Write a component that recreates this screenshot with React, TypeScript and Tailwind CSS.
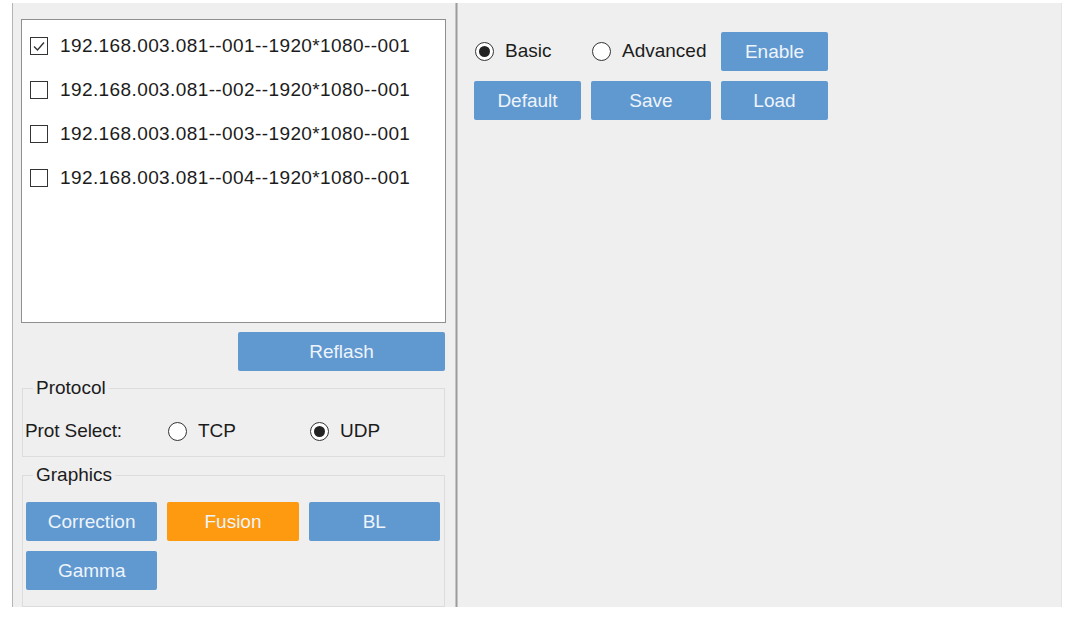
import React from 'react';

const font = { fontFamily: '"Liberation Sans", Arial, sans-serif' };

const devices = [
  '192.168.003.081--001--1920*1080--001',
  '192.168.003.081--002--1920*1080--001',
  '192.168.003.081--003--1920*1080--001',
  '192.168.003.081--004--1920*1080--001',
];

function CheckBox({ checked = false }: { checked?: boolean }) {
  return (
    <span className="w-[18px] h-[18px] border border-[#333] bg-white flex items-center justify-center shrink-0">
      {checked && (
        <svg width="14" height="14" viewBox="0 0 14 14">
          <path d="M2 7.5 L5.5 11 L12 3.5" fill="none" stroke="#333" strokeWidth="1.4" />
        </svg>
      )}
    </span>
  );
}

function Radio({ label, checked = false }: { label: string; checked?: boolean }) {
  return (
    <span className="flex items-center gap-[11px]">
      <span className="w-[19px] h-[19px] rounded-full border border-[#333] bg-white flex items-center justify-center shrink-0">
        {checked && <span className="w-[11px] h-[11px] rounded-full bg-[#222]" />}
      </span>
      <span>{label}</span>
    </span>
  );
}

function Btn({ label, orange = false, className = '' }: { label: string; orange?: boolean; className?: string }) {
  return (
    <button
      className={`h-[39px] rounded-[2px] text-[19px] pt-[2px] text-[#eef4fb] ${orange ? 'bg-[#fd9a10]' : 'bg-[#6098d0]'} ${className}`}
    >
      {label}
    </button>
  );
}

export default function App() {
  return (
    <div className="w-[1070px] h-[624px] bg-white pt-[3px] pl-[12px]" style={font}>
      <div className="w-[1050px] h-[604px] bg-[#efefef] border-l border-l-[#b4b4b4] border-r border-r-[#e4e4e4] flex text-[19px] text-[#1c1c1c]">
        {/* left side */}
        <div className="w-[442px] pl-[8px] pr-[9px] pt-[16px] flex flex-col">
          <div className="h-[304px] bg-white border border-[#8f8f8f] pt-[4px] pl-[8px]">
            {devices.map((d, i) => (
              <div key={d} className="h-[44px] flex items-center gap-[12px]">
                <CheckBox checked={i === 0} />
                <span className="tracking-[0.4px]">{d}</span>
              </div>
            ))}
          </div>
          <div className="flex justify-end mt-[9px] pr-[1px]">
            <Btn label="Reflash" className="w-[207px]" />
          </div>
          <fieldset className="mt-[6px] mx-[1px] border border-[#dcdcdc] pl-[2px] pb-[5px]">
            <legend className="ml-[8px] px-[3px] leading-[22px]">Protocol</legend>
            <div className="h-[40px] mt-[12px] flex items-center">
              <span className="w-[143px] tracking-[-0.1px]">Prot Select:</span>
              <span className="w-[142px]">
                <Radio label="TCP" />
              </span>
              <Radio label="UDP" checked />
            </div>
          </fieldset>
          <fieldset className="mt-[7px] mx-[1px] border border-[#dcdcdc] pl-[3px] pr-[4px] pb-[14px] flex-1">
            <legend className="ml-[7px] px-[3px] leading-[22px]">Graphics</legend>
            <div className="grid grid-cols-3 gap-[10px] mt-[16px]">
              <Btn label="Correction" />
              <Btn label="Fusion" orange />
              <Btn label="BL" />
              <Btn label="Gamma" />
            </div>
          </fieldset>
        </div>

        {/* divider */}
        <div className="w-[3px] bg-[#9c9c9c] border-x border-x-[#c4c4c4]" />

        {/* right side */}
        <div className="flex-1 pl-[16px] pt-[29px]">
          <div className="grid grid-cols-[107px_120px_107px] gap-[10px]">
            <div className="flex items-center pl-[1px]">
              <Radio label="Basic" checked />
            </div>
            <div className="flex items-center pl-[1px]">
              <Radio label="Advanced" />
            </div>
            <Btn label="Enable" />
            <Btn label="Default" />
            <Btn label="Save" />
            <Btn label="Load" />
          </div>
        </div>
      </div>
    </div>
  );
}
